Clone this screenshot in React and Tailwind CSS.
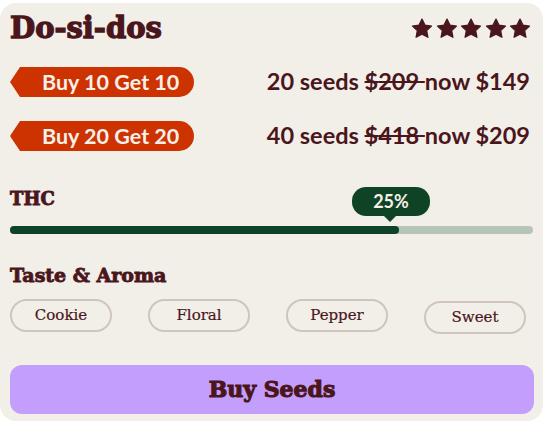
import React from "react";

const maroon = "text-[#4a161c]";

const Star = () => (
  <svg width="22" height="21" viewBox="0 0 24 23" className="fill-[#4a161c]">
    <path
      d="M12 1.2l3.2 6.6 7.2 1-5.3 5 1.4 7.3L12 17.6l-6.5 3.5 1.4-7.3-5.3-5 7.2-1L12 1.2z"
      stroke="#4a161c"
      strokeWidth="1.4"
      strokeLinejoin="round"
    />
  </svg>
);

const Badge = ({ label }) => (
  <div className="flex items-center h-[30px]">
    <span className="w-0 h-0 border-y-[15px] border-y-transparent border-r-[10px] border-r-[#cc3300]"></span>
    <span className="h-[30px] flex items-center bg-[#cc3300] rounded-r-full pl-[22px] pr-[15px] text-[#f7efe9] text-[21.5px] font-bold font-['Lato',sans-serif]">
      {label}
    </span>
  </div>
);

const DealRow = ({ label, seeds, was, now }) => (
  <div className="flex items-center justify-between h-[30px]">
    <Badge label={label} />
    <p className={`font-['Lato',sans-serif] font-bold text-[23.5px] ${maroon} pr-[3px]`}>
      {seeds} seeds <span className="line-through">${was} </span>now ${now}
    </p>
  </div>
);

const tastes = ["Cookie", "Floral", "Pepper", "Sweet"];

export default function App() {
  return (
    <div className="bg-white w-[545px] h-[425px] pt-[3px]">
      <div className="w-[543px] h-[418px] rounded-2xl bg-[#f2efe9] pl-[10px] pr-[10px] pt-[11px] flex flex-col">
        {/* Title + rating */}
        <div className="flex items-center justify-between h-[29px]">
          <h1 className={`font-['DejaVu_Serif',serif] font-black text-[29px] leading-none [-webkit-text-stroke:1.3px_#4a161c] ${maroon}`}>
            Do-si-dos
          </h1>
          <div className="flex gap-[2.5px] pr-[2px]">
            {[0, 1, 2, 3, 4].map((i) => (
              <Star key={i} />
            ))}
          </div>
        </div>

        {/* Deals */}
        <div className="mt-[24px] flex flex-col gap-[24px]">
          <DealRow label="Buy 10 Get 10" seeds="20" was="209" now="149" />
          <DealRow label="Buy 20 Get 20" seeds="40" was="418" now="209" />
        </div>

        {/* THC */}
        <p className={`mt-[39px] font-['DejaVu_Serif',serif] font-bold text-[18px] leading-none [-webkit-text-stroke:0.9px_#4a161c] ${maroon}`}>
          THC
        </p>
        <div className="relative mt-[18px] h-[8px] w-[523px] rounded-full bg-[#b7c5b7]">
          <div className="h-full w-[74.4%] rounded-full bg-[#0f4326]"></div>
          <div className="absolute left-[342px] top-[-39px] w-[78px] h-[29px] rounded-[14px] bg-[#0f4326] flex items-center justify-center text-[#f7efe9] font-bold text-[18px] font-['Lato',sans-serif]">
            25%
            <span className="absolute left-[32px] bottom-[-6px] w-0 h-0 border-x-[6px] border-x-transparent border-t-[6px] border-t-[#0f4326]"></span>
          </div>
        </div>

        {/* Taste & Aroma */}
        <p className={`mt-[32px] font-['DejaVu_Serif',serif] font-bold text-[19px] leading-none [-webkit-text-stroke:0.9px_#4a161c] ${maroon}`}>
          Taste &amp; Aroma
        </p>
        <div className="mt-[14px] flex gap-[36px] items-start">
          {tastes.map((t, i) => (
            <span
              key={t}
              className={`w-[102px] h-[33px] rounded-full border-2 border-[#cfc5be] flex items-center justify-center font-['DejaVu_Serif',serif] text-[15px] [-webkit-text-stroke:0.2px_#4a161c] ${maroon} ${
                i === 3 ? "mt-[2px]" : ""
              }`}
            >
              {t}
            </span>
          ))}
        </div>

        {/* Buy */}
        <button
          className={`mt-[31px] h-[49px] w-[524px] rounded-xl bg-[#c49efc] font-['DejaVu_Serif',serif] font-black text-[22px] [-webkit-text-stroke:1.1px_#4a161c] ${maroon}`}
        >
          Buy Seeds
        </button>
      </div>
    </div>
  );
}
